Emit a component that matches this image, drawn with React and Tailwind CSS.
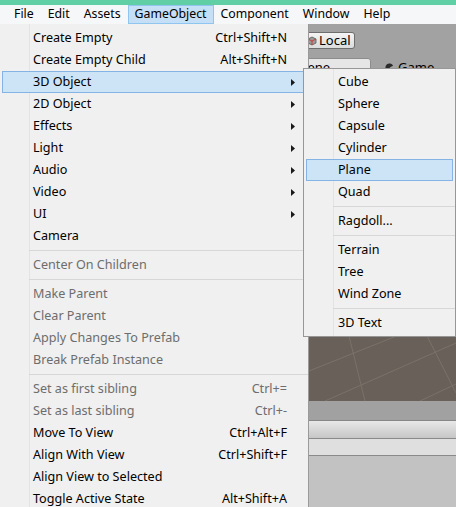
import React from "react";

const FONT = { fontFamily: '"Noto Sans", "Liberation Sans", sans-serif' };

const menuBar = ["File", "Edit", "Assets", "GameObject", "Component", "Window", "Help"];

// d = disabled ; sub = has submenu ; hl = highlighted
const mainItems = [
  { t: "Create Empty", k: "Ctrl+Shift+N" },
  { t: "Create Empty Child", k: "Alt+Shift+N" },
  { t: "3D Object", sub: true, hl: true },
  { t: "2D Object", sub: true },
  { t: "Effects", sub: true },
  { t: "Light", sub: true },
  { t: "Audio", sub: true },
  { t: "Video", sub: true },
  { t: "UI", sub: true },
  { t: "Camera" },
  { sep: true },
  { t: "Center On Children", d: true },
  { sep: true },
  { t: "Make Parent", d: true },
  { t: "Clear Parent", d: true },
  { t: "Apply Changes To Prefab", d: true },
  { t: "Break Prefab Instance", d: true },
  { sep: true },
  { t: "Set as first sibling", k: "Ctrl+=", d: true },
  { t: "Set as last sibling", k: "Ctrl+-", d: true },
  { t: "Move To View", k: "Ctrl+Alt+F" },
  { t: "Align With View", k: "Ctrl+Shift+F" },
  { t: "Align View to Selected" },
  { t: "Toggle Active State", k: "Alt+Shift+A" },
];

const subItems = [
  { t: "Cube" },
  { t: "Sphere" },
  { t: "Capsule" },
  { t: "Cylinder" },
  { t: "Plane", hl: true },
  { t: "Quad" },
  { sep: true },
  { t: "Ragdoll..." },
  { sep: true },
  { t: "Terrain" },
  { t: "Tree" },
  { t: "Wind Zone" },
  { sep: true },
  { t: "3D Text" },
];

function Arrow() {
  return (
    <svg width="4" height="7" viewBox="0 0 4 7">
      <path d="M0 0 L4 3.5 L0 7 Z" fill="#1a1a1a" />
    </svg>
  );
}

function Sep() {
  return (
    <div className="h-[7px] flex items-center pl-[29px]">
      <div className="h-px w-full bg-[#d7d7d7]" />
    </div>
  );
}

function MainRow({ it }) {
  if (it.sep) return <Sep />;
  const color = it.d ? "text-[#6d6d6d]" : "text-black";
  return (
    <div
      className={
        "h-[22px] flex items-center mx-[2px] border " +
        (it.hl ? "bg-[#cde4f7] border-[#84b4e6]" : "border-transparent")
      }
    >
      <span className={"pl-[30px] flex-1 " + color}>{it.t}</span>
      {it.k && <span className={"pr-[18px] " + color}>{it.k}</span>}
      {it.sub && (
        <span className="w-[20px] flex items-center pl-[4px] mr-[-2px]">
          <Arrow />
        </span>
      )}
    </div>
  );
}

function SubRow({ it }) {
  if (it.sep) return <Sep />;
  return (
    <div
      className={
        "h-[22px] flex items-center mx-[2px] border " +
        (it.hl ? "bg-[#cde4f7] border-[#84b4e6]" : "border-transparent")
      }
    >
      <span className="pl-[31px] text-black">{it.t}</span>
    </div>
  );
}

function SceneGrid() {
  return (
    <svg className="w-full h-full" viewBox="0 0 147 324" preserveAspectRatio="none">
      <g stroke="#7a726a" strokeWidth="1" fill="none">
        <line x1="0" y1="294" x2="90" y2="258" />
        <line x1="16" y1="324" x2="147" y2="266" />
        <line x1="111" y1="324" x2="147" y2="307" />
        <line x1="39" y1="255" x2="56" y2="324" />
        <line x1="116" y1="255" x2="147" y2="316" />
      </g>
    </svg>
  );
}

export default function App() {
  return (
    <div className="w-[456px] h-[507px] overflow-hidden relative bg-[#a2a2a2] text-[12.6px] leading-none" style={FONT}>
      <div className="h-[5px] bg-[#60cfa6]" />
      <div className="h-[19px] bg-[#f6f7f8] flex items-stretch pl-[7px] text-[12.3px]">
        {menuBar.map((m) => (
          <div
            key={m}
            className={
              "flex items-center px-[6px] border " +
              (m === "GameObject" ? "bg-[#c4dff6] border-[#90c5ef]" : "border-transparent")
            }
          >
            {m}
          </div>
        ))}
      </div>
      <div className="flex h-[483px]">
        <div className="w-[309px] border-r border-[#9a9a9a] pt-[3px] bg-[linear-gradient(to_right,#f0f0f0_29px,#e3e3e3_29px,#e3e3e3_30px,#f0f0f0_30px)]">
          {mainItems.map((it, i) => (
            <MainRow key={i} it={it} />
          ))}
        </div>
        <div className="flex-1 flex flex-col overflow-hidden">
          <div className="h-[31px] flex items-start pt-[8px]">
            <div className="ml-[-5px] h-[17px] w-[51px] shrink-0 rounded-[3px] border border-[#6e6e6e] bg-[linear-gradient(#f4f4f4,#dcdcdc)] flex items-center gap-[2px] pl-[2px]">
              <svg width="10" height="10" viewBox="0 0 10 10">
                <path d="M5 1 L9 3 L9 7 L5 9 L1 7 L1 3 Z" fill="#9a9a9a" stroke="#555" strokeWidth="0.8" />
                <path d="M1 3 L5 5 L9 3 M5 5 L5 9" stroke="#c33" strokeWidth="0.9" fill="none" />
              </svg>
              <span className="text-[13px]">Local</span>
            </div>
          </div>
          <div className="h-[22px] flex items-start pt-[3px]">
            <div className="ml-[-24px] w-[86px] shrink-0 h-[19px] bg-[#e6e6e6] border border-[#8c8c8c] rounded-t-[3px] flex items-center pl-[8px] text-[13px]">
              Scene
            </div>
            <div className="flex items-center gap-[4px] ml-[14px] h-[19px] text-[13px] shrink-0">
              <svg width="9" height="9" viewBox="0 0 10 10">
                <path d="M9 3 A4.5 4.5 0 1 0 9 7 L5 5 Z" fill="#2b2b2b" />
              </svg>
              Game
            </div>
          </div>
          <div className="h-[324px] bg-[#696159]">
            <SceneGrid />
          </div>
          <div className="h-[20px] bg-[#a1a1a1] border-b border-[#878787]" />
          <div className="h-[18px] bg-[linear-gradient(#e8e8e8,#c6c6c6)] border-b border-[#8a8a8a]" />
          <div className="h-[17px] bg-[#dfdfdf] border-b border-[#8a8a8a]" />
          <div className="flex-1 bg-[#c2c2c2]" />
        </div>
      </div>
      <div className="absolute left-[303px] top-[68px] w-[153px] h-[269px] border border-[#979797] pt-[2px] bg-[linear-gradient(to_right,#f0f0f0_29px,#e3e3e3_29px,#e3e3e3_30px,#f0f0f0_30px)]">
        {subItems.map((it, i) => (
          <SubRow key={i} it={it} />
        ))}
      </div>
    </div>
  );
}
